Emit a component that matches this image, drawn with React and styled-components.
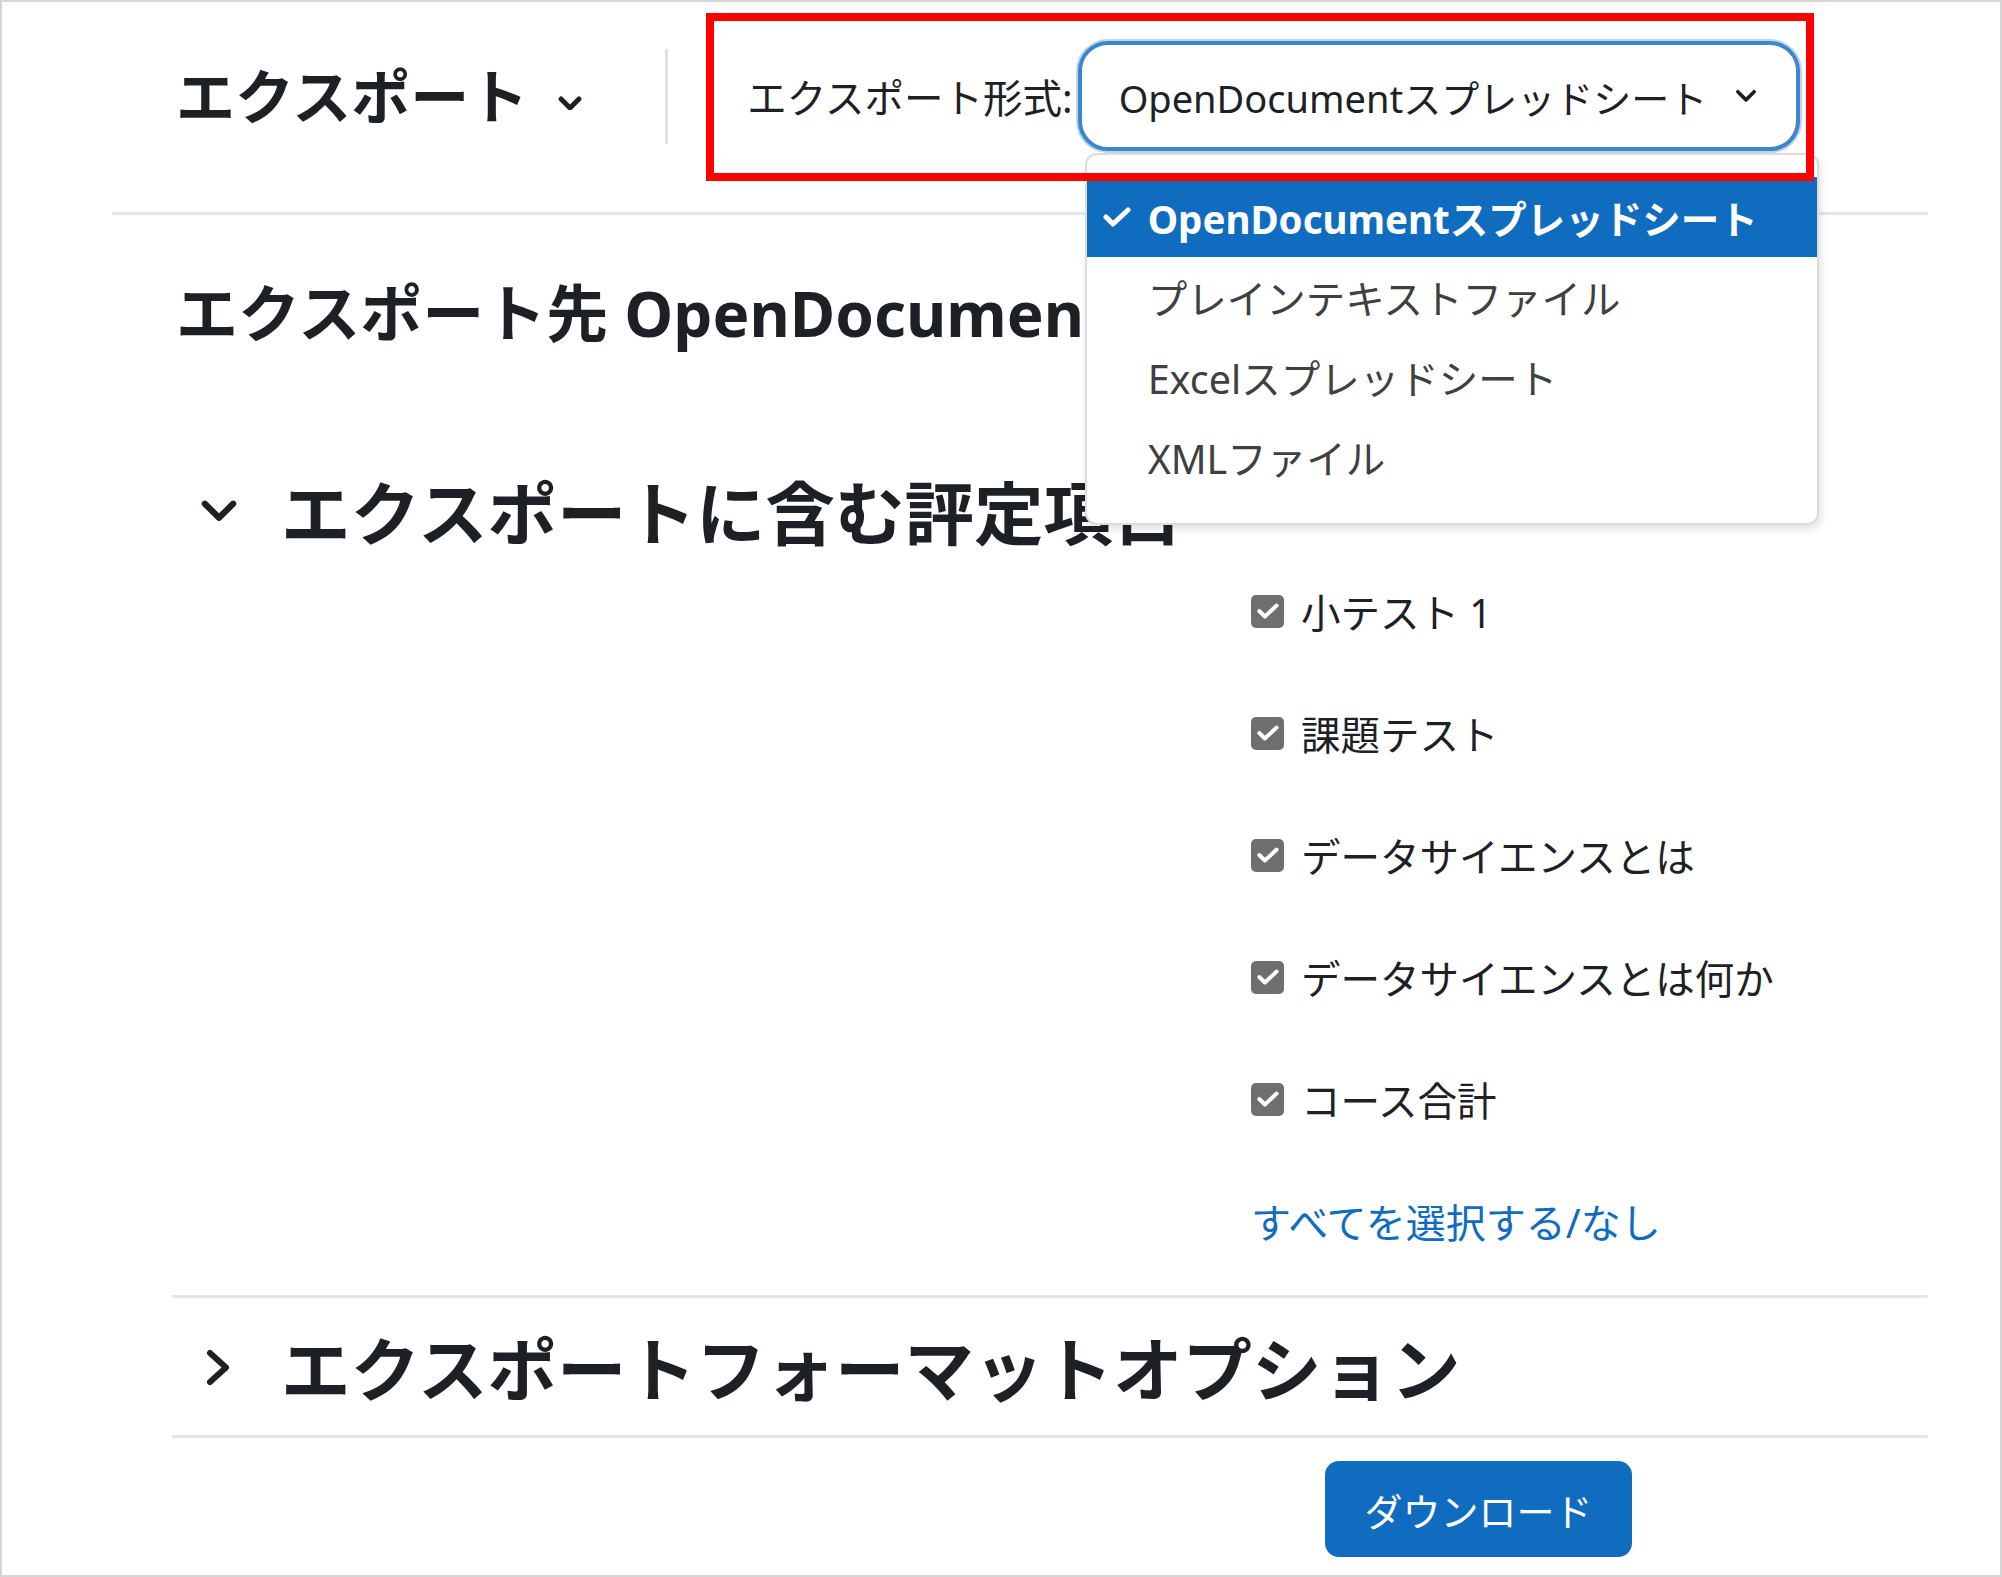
import React from 'react'
import styled, { createGlobalStyle } from 'styled-components'

const GlobalStyle = createGlobalStyle`
  html, body {
    margin: 0;
    padding: 0;
    background: #fff;
  }
  body {
    font-family: "Noto Sans", "Noto Sans CJK JP", sans-serif;
    color: #1d2125;
  }
  * {
    box-sizing: border-box;
  }
`

const formats = [
  'OpenDocumentスプレッドシート',
  'プレインテキストファイル',
  'Excelスプレッドシート',
  'XMLファイル',
]

const gradeItems = [
  '小テスト 1',
  '課題テスト',
  'データサイエンスとは',
  'データサイエンスとは何か',
  'コース合計',
]

function Caret({ size = 24, stroke = 5 }) {
  return (
    <svg width={size} height={size * 0.62} viewBox="0 0 24 15" fill="none">
      <polyline points="3,3 12,12 21,3" stroke="#1d2125" strokeWidth={stroke} strokeLinecap="round" strokeLinejoin="round" />
    </svg>
  )
}

function CaretRight() {
  return (
    <svg width="27" height="37" viewBox="0 0 27 37" fill="none">
      <polyline points="5,4 21,18.5 5,33" stroke="#1d2125" strokeWidth="6" strokeLinecap="round" strokeLinejoin="round" />
    </svg>
  )
}

function CheckMark({ color = '#fff' }) {
  return (
    <svg width="28" height="20" viewBox="0 0 28 20" fill="none">
      <polyline points="3,10 10,17 25,3" stroke={color} strokeWidth="5" strokeLinecap="round" strokeLinejoin="round" />
    </svg>
  )
}

function App() {
  return (
    <Frame>
      <GlobalStyle />
      <Header>
        <Title>エクスポート</Title>
        <TitleCaret>
          <Caret size={24} stroke={5} />
        </TitleCaret>
        <Separator />
        <FormatLabel>エクスポート形式:</FormatLabel>
        <SelectWrap>
          <SelectBox>
            <SelectText>{formats[0]}</SelectText>
            <Caret size={22} stroke={4} />
          </SelectBox>
          <Dropdown>
            {formats.map((f, i) => (
              <Option key={f} $selected={i === 0}>
                {i === 0 && (
                  <OptionCheck>
                    <CheckMark />
                  </OptionCheck>
                )}
                {f}
              </Option>
            ))}
          </Dropdown>
        </SelectWrap>
      </Header>

      <Main>
        <ExportHeading>エクスポート先 OpenDocumentスプレッドシート</ExportHeading>

        <SectionHeader>
          <SectionToggle>
            <Caret size={38} stroke={4} />
          </SectionToggle>
          エクスポートに含む評定項目
        </SectionHeader>

        <Items>
          {gradeItems.map((item) => (
            <ItemRow key={item}>
              <CheckBox>
                <CheckMark />
              </CheckBox>
              <ItemLabel>{item}</ItemLabel>
            </ItemRow>
          ))}
          <ItemRow>
            <SelectAll href="#">すべてを選択する/なし</SelectAll>
          </ItemRow>
        </Items>

        <Collapsed>
          <SectionHeader $collapsed>
            <SectionToggle $collapsed>
              <CaretRight />
            </SectionToggle>
            エクスポートフォーマットオプション
          </SectionHeader>
        </Collapsed>

        <DownloadButton>ダウンロード</DownloadButton>
      </Main>

      <Highlight />
    </Frame>
  )
}

export default App

const Frame = styled.div`
  position: relative;
  width: 2002px;
  height: 1577px;
  border: 2px solid #d5d5d5;
  overflow: hidden;
  background: #fff;
`

const Header = styled.header`
  display: flex;
  align-items: center;
  margin-left: 110px;
  width: 1816px;
  padding: 39px 0 61px 64px;
  border-bottom: 3px solid #e3e6ea;
`

const Title = styled.h1`
  margin: 0;
  font-size: 59px;
  line-height: 1;
  font-weight: 700;
  color: #1d2125;
  white-space: nowrap;
`

const TitleCaret = styled.span`
  display: flex;
  margin-left: 30px;
  margin-top: 14px;
`

const Separator = styled.div`
  width: 3px;
  height: 95px;
  margin-left: 83px;
  background: #dee2e6;
`

const FormatLabel = styled.label`
  margin-left: 79px;
  margin-right: 5px;
  font-size: 39.5px;
  color: #1d2125;
  white-space: nowrap;
`

const SelectWrap = styled.div`
  position: relative;
`

const SelectBox = styled.div`
  display: flex;
  align-items: center;
  width: 722px;
  height: 110px;
  padding: 0 39px 0 37px;
  border: 4px solid #3d86cb;
  border-radius: 30px;
  box-shadow: 0 0 0 2px rgba(61, 134, 203, 0.35);
  background: #fff;
`

const SelectText = styled.span`
  flex: 1;
  font-size: 38px;
  color: #1d2125;
  white-space: nowrap;
`

const Dropdown = styled.div`
  position: absolute;
  top: 112px;
  left: 7px;
  width: 734px;
  padding: 22px 0 26px;
  background: #fff;
  border: 2px solid #dcdcdc;
  border-radius: 12px;
  box-shadow: 2px 4px 8px rgba(0, 0, 0, 0.12);
  z-index: 10;
`

const Option = styled.div`
  display: flex;
  align-items: center;
  height: 80px;
  padding-left: ${(p) => (p.$selected ? '16px' : '61px')};
  font-size: ${(p) => (p.$selected ? '38.5px' : '39.5px')};
  white-space: nowrap;
  font-weight: ${(p) => (p.$selected ? 700 : 400)};
  color: ${(p) => (p.$selected ? '#fff' : '#404040')};
  background: ${(p) => (p.$selected ? '#0f6cbf' : 'transparent')};
`

const OptionCheck = styled.span`
  display: flex;
  margin-right: 17px;
`

const Main = styled.main`
  margin-left: 170px;
  width: 1756px;
`

const ExportHeading = styled.h2`
  margin: 61px 0 0 4px;
  font-size: 62px;
  line-height: 74px;
  font-weight: 700;
  color: #1d2125;
  white-space: nowrap;
`

const SectionHeader = styled.h3`
  display: flex;
  align-items: center;
  height: 82px;
  margin: ${(p) => (p.$collapsed ? '26px 0 29px' : '118px 0 0')};
  padding-left: ${(p) => (p.$collapsed ? '33px' : '28px')};
  font-size: 69.5px;
  font-weight: 700;
  color: #1d2125;
  white-space: nowrap;
`

const SectionToggle = styled.span`
  display: flex;
  margin-right: ${(p) => (p.$collapsed ? '49px' : '43px')};
  margin-top: 4px;
`

const Items = styled.div`
  display: flex;
  flex-direction: column;
  padding-left: 1079px;
`

const ItemRow = styled.div`
  display: flex;
  align-items: center;
  height: 122px;
`

const CheckBox = styled.span`
  display: flex;
  align-items: center;
  justify-content: center;
  width: 33px;
  height: 33px;
  margin-right: 17px;
  border-radius: 5px;
  background: #6f6f6f;

  svg {
    width: 22px;
    height: 16px;
  }
`

const ItemLabel = styled.span`
  font-size: 39.5px;
  color: #1d2125;
  white-space: nowrap;
`

const SelectAll = styled.a`
  font-size: 40px;
  color: #0f6cbf;
  text-decoration: none;
  white-space: nowrap;
`

const Collapsed = styled.section`
  margin-top: 13px;
  border-top: 3px solid #e3e6ea;
  border-bottom: 3px solid #e3e6ea;
`

const DownloadButton = styled.button`
  display: block;
  width: 307px;
  height: 96px;
  margin: 23px 0 0 1153px;
  border: none;
  border-radius: 14px;
  background: #0f6cbf;
  color: #fff;
  font-family: inherit;
  font-size: 38px;
`

const Highlight = styled.div`
  position: absolute;
  left: 704px;
  top: 11px;
  width: 1108px;
  height: 168px;
  border: 8px solid #ff0000;
  z-index: 20;
  pointer-events: none;
`
